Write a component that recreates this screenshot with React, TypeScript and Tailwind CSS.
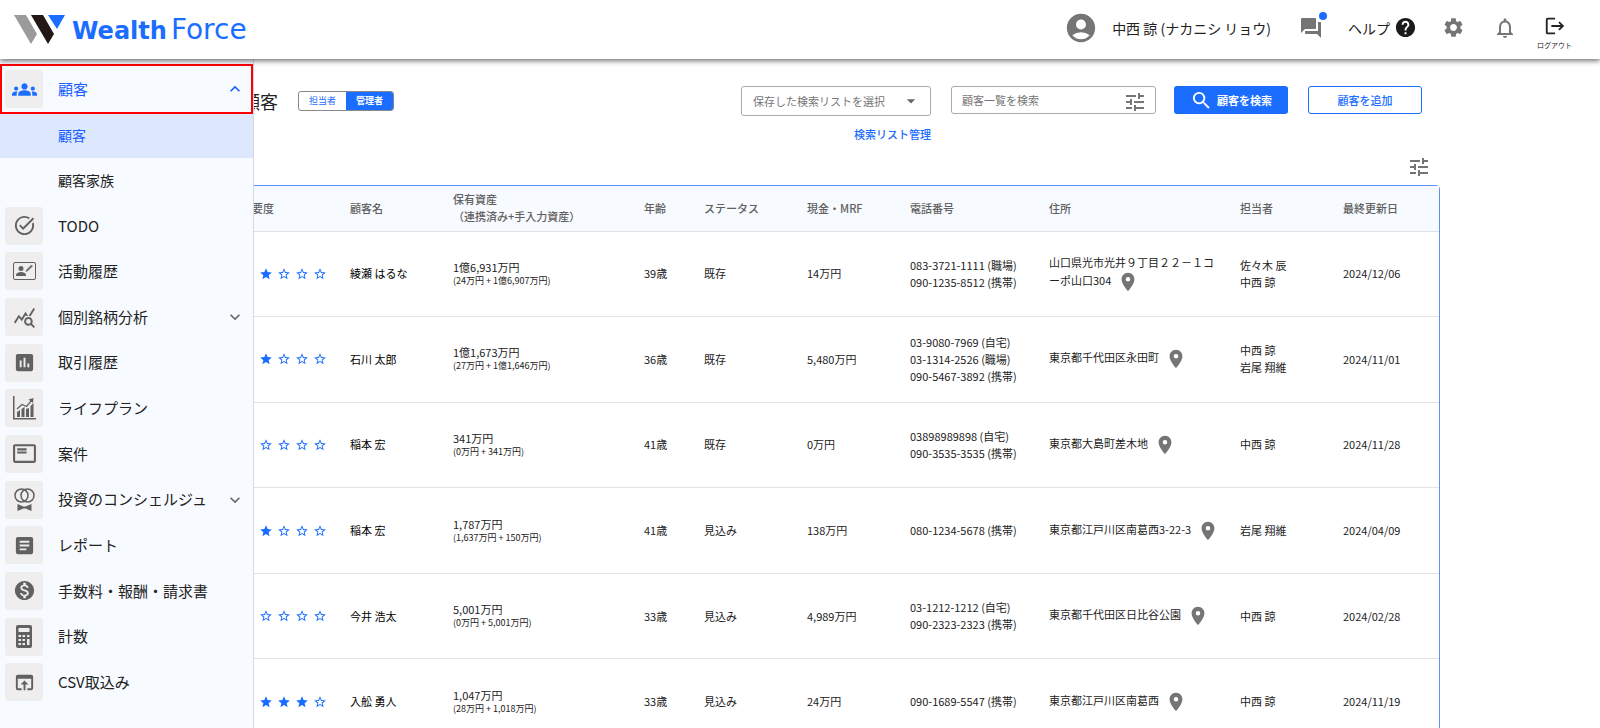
import React from "react";
import {
  MdAccountCircle,
  MdArrowDropDown,
  MdArticle,
  MdAssessment,
  MdExpandLess,
  MdExpandMore,
  MdForum,
  MdGroups,
  MdHelp,
  MdLogout,
  MdMonetizationOn,
  MdNotificationsNone,
  MdOpenInBrowser,
  MdOutlineFeaturedPlayList,
  MdPlace,
  MdQueryStats,
  MdSearch,
  MdSettings,
  MdStar,
  MdStarBorder,
  MdTaskAlt,
  MdTune,
} from "react-icons/md";

const menu: { label: string; icon: React.ReactNode; expandable?: boolean }[] = [
  { label: "TODO", icon: <MdTaskAlt className="size-[23px]" /> },
  { label: "活動履歴", icon: <ActivityIcon /> },
  { label: "個別銘柄分析", icon: <MdQueryStats className="size-[23px]" />, expandable: true },
  { label: "取引履歴", icon: <MdAssessment className="size-[23px]" /> },
  { label: "ライフプラン", icon: <GrowthIcon /> },
  { label: "案件", icon: <MdOutlineFeaturedPlayList className="size-[25px]" /> },
  { label: "投資のコンシェルジュ", icon: <ConciergeIcon />, expandable: true },
  { label: "レポート", icon: <MdArticle className="size-[23px]" /> },
  { label: "手数料・報酬・請求書", icon: <MdMonetizationOn className="size-[23px]" /> },
  { label: "計数", icon: <CalculatorIcon /> },
  { label: "CSV取込み", icon: <MdOpenInBrowser className="size-[23px]" /> },
];

const customers = [
  {
    stars: 2,
    name: "綾瀬 はるな",
    total: "1億6,931万円",
    detail: "(24万円 + 1億6,907万円)",
    age: "39歳",
    status: "既存",
    cash: "14万円",
    phones: ["083-3721-1111 (職場)", "090-1235-8512 (携帯)"],
    address: "山口県光市光井９丁目２２－１コーポ山口304",
    staff: ["佐々木 辰", "中西 諒"],
    updated: "2024/12/06",
  },
  {
    stars: 2,
    name: "石川 太郎",
    total: "1億1,673万円",
    detail: "(27万円 + 1億1,646万円)",
    age: "36歳",
    status: "既存",
    cash: "5,480万円",
    phones: ["03-9080-7969 (自宅)", "03-1314-2526 (職場)", "090-5467-3892 (携帯)"],
    address: "東京都千代田区永田町",
    staff: ["中西 諒", "岩尾 翔維"],
    updated: "2024/11/01",
  },
  {
    stars: 1,
    name: "稲本 宏",
    total: "341万円",
    detail: "(0万円 + 341万円)",
    age: "41歳",
    status: "既存",
    cash: "0万円",
    phones: ["03898989898 (自宅)", "090-3535-3535 (携帯)"],
    address: "東京都大島町差木地",
    staff: ["中西 諒"],
    updated: "2024/11/28",
  },
  {
    stars: 2,
    name: "稲本 宏",
    total: "1,787万円",
    detail: "(1,637万円 + 150万円)",
    age: "41歳",
    status: "見込み",
    cash: "138万円",
    phones: ["080-1234-5678 (携帯)"],
    address: "東京都江戸川区南葛西3-22-3",
    staff: ["岩尾 翔維"],
    updated: "2024/04/09",
  },
  {
    stars: 1,
    name: "今井 浩太",
    total: "5,001万円",
    detail: "(0万円 + 5,001万円)",
    age: "33歳",
    status: "見込み",
    cash: "4,989万円",
    phones: ["03-1212-1212 (自宅)", "090-2323-2323 (携帯)"],
    address: "東京都千代田区日比谷公園",
    staff: ["中西 諒"],
    updated: "2024/02/28",
  },
  {
    stars: 4,
    name: "入舩 勇人",
    total: "1,047万円",
    detail: "(28万円 + 1,018万円)",
    age: "33歳",
    status: "見込み",
    cash: "24万円",
    phones: ["090-1689-5547 (携帯)"],
    address: "東京都江戸川区南葛西",
    staff: ["中西 諒"],
    updated: "2024/11/19",
  },
];

function App() {
  return (
    <div
      lang="ja"
      className="flex h-screen flex-col overflow-hidden bg-white font-['Noto_Sans_CJK_JP',sans-serif] text-[#222]"
    >
      <Header />
      <div className="relative min-h-0 flex-1">
        <Sidebar />
        <main className="h-full overflow-hidden pr-[160px] pl-[224px]">
          <Toolbar />
          <div className="flex h-[43px] items-start justify-end pt-[13px] pr-[9px]">
            <button aria-label="表示項目" className="text-[#757575]">
              <MdTune className="size-6" />
            </button>
          </div>
          <CustomerTable />
        </main>
      </div>
    </div>
  );
}

function Header() {
  return (
    <header className="z-20 flex h-[59px] shrink-0 items-center justify-between bg-white pr-7 pl-[14px] shadow-[0_2px_5px_rgba(0,0,0,0.55)]">
      <a href="#" className="flex items-center gap-[7px] text-[#1a6dff]">
        <svg width="51" height="29" viewBox="0 0 51 29">
          <path d="M0 0h12l11 19-6 10z" fill="#9b9b9b" />
          <path d="M17 0h12l11 19-6 10z" fill="#231815" />
          <path d="M34 0h17l-8 14z" fill="#1a6dff" />
        </svg>
        <span className="flex items-baseline gap-1 font-['DejaVu_Sans',sans-serif] text-2xl">
          <b>Wealth</b>
          <span className="text-[28px]">Force</span>
        </span>
      </a>

      <div className="flex items-center pb-1 text-sm">
        <MdAccountCircle className="mr-[14px] size-[34px] text-[#757575]" />
        <span>中西 諒 (ナカニシ リョウ)</span>
        <button aria-label="メッセージ" className="relative ml-7 text-[#757575]">
          <MdForum className="size-6" />
          <span className="absolute -top-1 -right-1 size-2 rounded-full bg-[#1a6dff]" />
        </button>
        <a href="#help" className="ml-[25px] flex items-center gap-1">
          ヘルプ
          <MdHelp className="size-[23px] text-[#1b1b1b]" />
        </a>
        <button aria-label="設定" className="ml-[25px] text-[#757575]">
          <MdSettings className="size-[23px]" />
        </button>
        <button aria-label="通知" className="ml-7 text-[#757575]">
          <MdNotificationsNone className="size-6" />
        </button>
        <button className="ml-5 flex flex-col items-center gap-1 pt-2">
          <MdLogout className="size-[22px]" />
          <span className="text-[7px] leading-2">ログアウト</span>
        </button>
      </div>
    </header>
  );
}

function Sidebar() {
  return (
    <nav className="absolute inset-y-0 left-0 z-10 w-[254px] border-r border-[#d5dae2] bg-[#f7faff] pt-[5px] text-[15px]">
      <button className="flex h-[50px] w-full items-center border-2 border-[#f00] pr-[6px] pl-[3px] text-[#1a5eff]">
        <MenuIcon>
          <MdGroups className="size-[25px] text-[#1a6dff]" />
        </MenuIcon>
        顧客
        <MdExpandLess className="ml-auto size-5" />
      </button>
      <a href="#customers" className="flex h-11 items-center bg-[#dde8ff] pb-0.5 pl-[58px] text-sm text-[#1a5eff]">
        顧客
      </a>
      <a href="#families" className="flex h-[45px] items-center pb-0.5 pl-[58px] text-sm">
        顧客家族
      </a>
      <ul className="grid h-[502px] auto-rows-fr">
        {menu.map((item) => (
          <li key={item.label}>
            <button className="flex size-full items-center pr-2 pl-[5px]">
              <MenuIcon>{item.icon}</MenuIcon>
              {item.label}
              {item.expandable && <MdExpandMore className="ml-auto size-5 text-[#666]" />}
            </button>
          </li>
        ))}
      </ul>
    </nav>
  );
}

function MenuIcon({ children }: { children: React.ReactNode }) {
  return (
    <span className="mr-[15px] flex size-[38px] shrink-0 items-center justify-center rounded-[3px] bg-[#eee] text-[#616161]">
      {children}
    </span>
  );
}

function Toolbar() {
  return (
    <div className="flex items-start px-[18px] pt-[27px] text-[11px]">
      <h1 className="text-lg leading-[30px]">顧客</h1>
      <div className="mt-[5px] ml-5 flex h-5 overflow-hidden rounded-[3px] border border-[#888] text-[9px]">
        <button className="w-[47px] text-[#1a6dff]">担当者</button>
        <button className="w-[47px] bg-[#1a6dff] font-bold text-white">管理者</button>
      </div>

      <div className="ml-auto w-[190px]">
        <div className="relative">
          <select
            aria-label="保存した検索リスト"
            className="h-[30px] w-full appearance-none rounded-[3px] border border-[#aaa] bg-white pl-[11px] text-[#757575]"
          >
            <option>保存した検索リストを選択</option>
          </select>
          <MdArrowDropDown className="pointer-events-none absolute top-[5px] right-[10px] size-5 text-[#666]" />
        </div>
        <a href="#lists" className="mt-[10px] block text-right leading-4 font-medium text-[#1a6dff]">
          検索リスト管理
        </a>
      </div>
      <div className="relative ml-5 w-[205px]">
        <input
          aria-label="顧客一覧を検索"
          placeholder="顧客一覧を検索"
          className="h-7 w-full rounded-[3px] border border-[#aaa] pr-9 pl-[10px] placeholder:text-[#757575]"
        />
        <button aria-label="絞り込み" className="absolute top-1 right-[9px] text-[#757575]">
          <MdTune className="size-6" />
        </button>
      </div>
      <button className="ml-[18px] flex h-7 w-[114px] items-center justify-center gap-1 rounded-[3px] bg-[#1a6dff] font-bold text-white">
        <MdSearch className="size-[23px]" />
        顧客を検索
      </button>
      <button className="ml-5 h-7 w-[114px] rounded-[3px] border border-[#1a6dff] font-medium text-[#1a6dff]">
        顧客を追加
      </button>
    </div>
  );
}

function CustomerTable() {
  return (
    <div className="rounded border border-[#5b8ff9]">
      <table className="h-[559px] w-full table-fixed text-left text-[11px] leading-[17px]">
        <thead className="text-[#616161]">
          <tr className="h-[45px] border-b border-[#dde1e8] bg-[#f7faff] [&>th]:pl-4 [&>th]:font-medium">
            <th className="w-[109px]">重要度</th>
            <th className="w-[103px]">顧客名</th>
            <th className="w-[191px]">
              保有資産
              <br />
              （連携済み+手入力資産）
            </th>
            <th className="w-[60px]">年齢</th>
            <th className="w-[103px]">ステータス</th>
            <th className="w-[103px]">現金・MRF</th>
            <th className="w-[139px]">電話番号</th>
            <th className="w-[191px]">住所</th>
            <th className="w-[103px]">担当者</th>
            <th>最終更新日</th>
          </tr>
        </thead>
        <tbody>
          {customers.map((c) => (
            <tr key={c.updated} className="h-[85px] border-b border-[#e2e2e2] [&>td]:pl-4">
              <td>
                <Stars count={c.stars} />
              </td>
              <td className="text-black">{c.name}</td>
              <td>
                <div className="leading-[14px]">{c.total}</div>
                <div className="text-[9px] leading-[14px]">{c.detail}</div>
              </td>
              <td>{c.age}</td>
              <td>{c.status}</td>
              <td>{c.cash}</td>
              <td>
                {c.phones.map((phone) => (
                  <div key={phone}>{phone}</div>
                ))}
              </td>
              <td className="pr-1 [line-break:anywhere]">
                {c.address}
                <MdPlace className="ml-[6px] inline size-[22px] text-[#757575]" />
              </td>
              <td>
                {c.staff.map((name) => (
                  <div key={name}>{name}</div>
                ))}
              </td>
              <td>{c.updated}</td>
            </tr>
          ))}
        </tbody>
      </table>
    </div>
  );
}

function Stars({ count }: { count: number }) {
  return (
    <div className="flex gap-1 text-[#1a6dff]">
      {[1, 2, 3, 4, 5].map((n) =>
        n <= count ? (
          <MdStar key={n} className="size-[14px] shrink-0" />
        ) : (
          <MdStarBorder key={n} className="size-[14px] shrink-0" />
        )
      )}
    </div>
  );
}

function ActivityIcon() {
  return (
    <svg width="23" height="18" viewBox="0 0 23 18">
      <rect x="0.5" y="0.5" width="22" height="17" rx="1.5" fill="none" stroke="currentColor" />
      <circle cx="8" cy="6.5" r="2.5" fill="currentColor" />
      <path d="M3 14v-1c0-2 2.5-3 5-3s5 1 5 3v1z" fill="currentColor" />
      <path d="M13 9.5l1.5-.5L19.5 4l-1-1-5 5z" fill="currentColor" stroke="currentColor" strokeWidth="0.5" />
    </svg>
  );
}

function GrowthIcon() {
  return (
    <svg width="23" height="24" viewBox="0 0 23 24" fill="currentColor">
      <path d="M0 0h1.5v22H23v1.5H0z" />
      <path d="M4 16l3-2v7H4zM8.5 13l3-2v10h-3zM13 13l3-1v9h-3zM17.5 10l3-3v14h-3z" />
      <path d="M4 13l5-4.5 4.5 2 5-6" fill="none" stroke="currentColor" strokeWidth="1.2" />
      <path d="M15.5 3.5l5-1.5-.5 5z" />
    </svg>
  );
}

function ConciergeIcon() {
  return (
    <svg width="21" height="24" viewBox="0 0 21 24">
      <circle cx="7.5" cy="7.5" r="6.5" fill="none" stroke="currentColor" strokeWidth="1.5" />
      <circle cx="13.5" cy="7.5" r="6.5" fill="none" stroke="currentColor" strokeWidth="1.5" />
      <path d="M3.5 16l6 2.5h2l6-2.5v7l-6-2.5h-2l-6 2.5z" fill="currentColor" />
    </svg>
  );
}

function CalculatorIcon() {
  return (
    <svg width="16" height="23" viewBox="0 0 16 23">
      <rect width="16" height="23" rx="2" fill="currentColor" />
      <g fill="#eee">
        <rect x="2.5" y="3" width="11" height="4" />
        <rect x="2.5" y="10" width="2.5" height="2" />
        <rect x="6.5" y="10" width="2.5" height="2" />
        <rect x="11" y="10" width="2.5" height="2" />
        <rect x="2.5" y="14" width="2.5" height="2" />
        <rect x="6.5" y="14" width="2.5" height="2" />
        <rect x="2.5" y="18" width="2.5" height="2" />
        <rect x="6.5" y="18" width="2.5" height="2" />
        <rect x="11" y="14" width="2.5" height="6" />
      </g>
    </svg>
  );
}

export default App;
